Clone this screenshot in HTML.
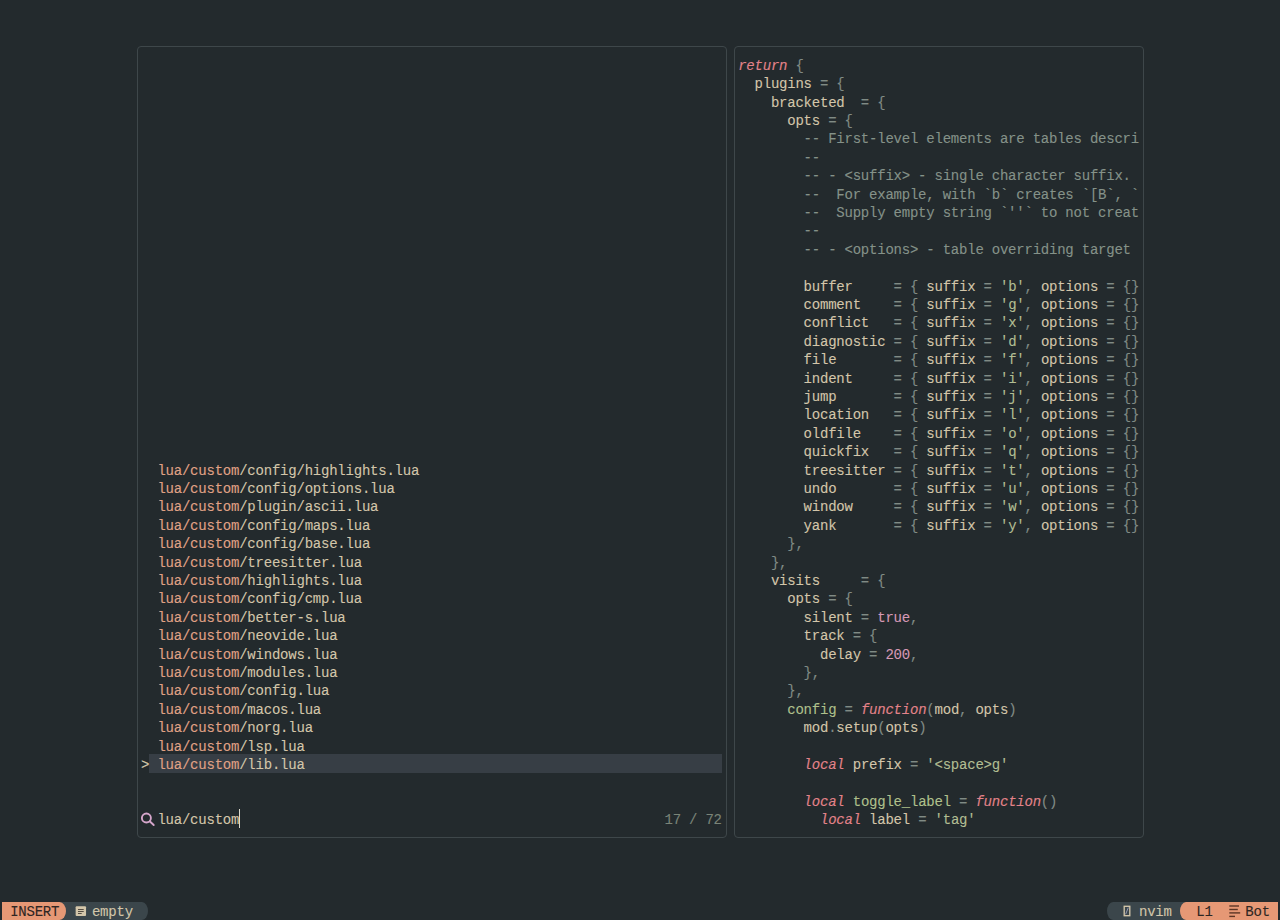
<!DOCTYPE html><html><head><meta charset="utf-8"><style>
html,body{margin:0;padding:0;width:1280px;height:920px;overflow:hidden;background:#232a2d;}
.t{position:absolute;white-space:pre;font-family:"Liberation Mono",monospace;font-size:14.0px;letter-spacing:-0.2214px;line-height:18.4px;height:18.4px;color:#d3c6aa;-webkit-text-stroke:0.1px currentColor;}
.m{color:#e0a286;}
.f{color:#d3c6aa;}
.p{color:#808b85;}
.c{color:#859289;}
.kw{color:#e3838a;font-style:italic;}
.s{color:#b2be93;}
.num{color:#d699b6;}
.fn{color:#afc08c;}
.ins{color:#2e2622;}
.cnt{color:#7a8478;}
.box{position:absolute;box-sizing:border-box;border:1px solid #3e474a;border-radius:4px;}
.r{position:absolute;}

</style></head><body>
<div class="box" style="left:137px;top:46px;width:590px;height:792px"></div>
<div class="box" style="left:734px;top:46px;width:410px;height:792px"></div>
<div class="r" style="left:149.00px;top:754.40px;width:573.00px;height:18.40px;background:#373e45;"></div>
<div class="r" style="left:239.00px;top:809.20px;width:1.30px;height:18.60px;background:#dcd9cc;"></div>
<svg class="r" style="left:141.02px;top:809.60px" width="16" height="19" viewBox="0 0 16 19"><circle cx="5.4" cy="8.0" r="4.5" fill="none" stroke="#d5a6cb" stroke-width="1.9"/><line x1="8.7" y1="11.3" x2="12.7" y2="15.0" stroke="#d5a6cb" stroke-width="1.9" stroke-linecap="round"/></svg>
<div class="r" style="left:51.04px;top:902.00px;width:96.78px;height:18.00px;background:#3b464b;border-radius:0 6px 6px 0 / 0 9px 9px 0"></div>
<div class="r" style="left:1.96px;top:901.60px;width:63.76px;height:18.40px;background:#e69875;border-radius:0 6.5px 6.5px 0 / 0 9px 9px 0"></div>
<svg class="r" style="left:75px;top:902px" width="12" height="19" viewBox="0 0 12 19"><rect x="0.65" y="4.3" width="10.4" height="9.8" rx="1" fill="#d3c6aa"/><rect x="3" y="7" width="5.7" height="1" fill="#554d43"/><rect x="3" y="9" width="5.7" height="1" fill="#554d43"/><rect x="3" y="11" width="3.7" height="1" fill="#554d43"/></svg>
<div class="r" style="left:1107.06px;top:902.00px;width:81.00px;height:18.00px;background:#3b464b;border-radius:6px 0 0 6px / 9px 0 0 9px"></div>
<div class="r" style="left:1180.48px;top:901.60px;width:97.52px;height:18.40px;background:#e69875;border-radius:6px 0 0 6px / 9px 0 0 9px"></div>
<svg class="r" style="left:1122px;top:902px" width="10" height="19" viewBox="0 0 10 19"><rect x="2.2" y="4.3" width="5.6" height="9.4" fill="none" stroke="#d3c6aa" stroke-width="1.35"/><line x1="3.6" y1="12.3" x2="6.3" y2="5.6" stroke="#a0a4c0" stroke-width="0.9"/></svg>
<svg class="r" style="left:1229px;top:902px" width="12" height="19" viewBox="0 0 12 19"><g fill="#5c3525"><rect x="0.3" y="3.3" width="9.7" height="1.4"/><rect x="0.3" y="6.8" width="8.5" height="1.4"/><rect x="0.3" y="10.2" width="10.9" height="1.4"/><rect x="0.3" y="13.7" width="5.7" height="1.4"/></g></svg>
<div class="t" style="left:157.38px;top:461.55px"><span class="m">lua/custom</span><span class="f">/config/highlights.lua</span></div>
<div class="t" style="left:157.38px;top:479.95px"><span class="m">lua/custom</span><span class="f">/config/options.lua</span></div>
<div class="t" style="left:157.38px;top:498.35px"><span class="m">lua/custom</span><span class="f">/plugin/ascii.lua</span></div>
<div class="t" style="left:157.38px;top:516.75px"><span class="m">lua/custom</span><span class="f">/config/maps.lua</span></div>
<div class="t" style="left:157.38px;top:535.15px"><span class="m">lua/custom</span><span class="f">/config/base.lua</span></div>
<div class="t" style="left:157.38px;top:553.55px"><span class="m">lua/custom</span><span class="f">/treesitter.lua</span></div>
<div class="t" style="left:157.38px;top:571.95px"><span class="m">lua/custom</span><span class="f">/highlights.lua</span></div>
<div class="t" style="left:157.38px;top:590.35px"><span class="m">lua/custom</span><span class="f">/config/cmp.lua</span></div>
<div class="t" style="left:157.38px;top:608.75px"><span class="m">lua/custom</span><span class="f">/better-s.lua</span></div>
<div class="t" style="left:157.38px;top:627.15px"><span class="m">lua/custom</span><span class="f">/neovide.lua</span></div>
<div class="t" style="left:157.38px;top:645.55px"><span class="m">lua/custom</span><span class="f">/windows.lua</span></div>
<div class="t" style="left:157.38px;top:663.95px"><span class="m">lua/custom</span><span class="f">/modules.lua</span></div>
<div class="t" style="left:157.38px;top:682.35px"><span class="m">lua/custom</span><span class="f">/config.lua</span></div>
<div class="t" style="left:157.38px;top:700.75px"><span class="m">lua/custom</span><span class="f">/macos.lua</span></div>
<div class="t" style="left:157.38px;top:719.15px"><span class="m">lua/custom</span><span class="f">/norg.lua</span></div>
<div class="t" style="left:157.38px;top:737.55px"><span class="m">lua/custom</span><span class="f">/lsp.lua</span></div>
<div class="t" style="left:157.38px;top:755.95px"><span class="m">lua/custom</span><span class="f">/lib.lua</span></div>
<div class="t" style="left:141.02px;top:755.95px"><span class="f">&gt;</span></div>
<div class="t" style="left:157.38px;top:811.15px"><span class="f">lua/custom</span></div>
<div class="t" style="left:664.54px;top:811.15px"><span class="cnt">17 / 72</span></div>
<div class="t" style="left:738.16px;top:56.75px"><span class="kw">return</span> <span class="p">{</span></div>
<div class="t" style="left:738.16px;top:75.15px"><span class="f">  plugins</span><span class="p"> = </span><span class="p">{</span></div>
<div class="t" style="left:738.16px;top:93.55px"><span class="f">    bracketed</span><span class="p">  = </span><span class="p">{</span></div>
<div class="t" style="left:738.16px;top:111.95px"><span class="f">      opts</span><span class="p"> = </span><span class="p">{</span></div>
<div class="t" style="left:738.16px;top:130.35px"><span class="c">        -- First-level elements are tables descri</span></div>
<div class="t" style="left:738.16px;top:148.75px"><span class="c">        --</span></div>
<div class="t" style="left:738.16px;top:167.15px"><span class="c">        -- - &lt;suffix&gt; - single character suffix.</span></div>
<div class="t" style="left:738.16px;top:185.55px"><span class="c">        --  For example, with `b` creates `[B`, `</span></div>
<div class="t" style="left:738.16px;top:203.95px"><span class="c">        --  Supply empty string `''` to not creat</span></div>
<div class="t" style="left:738.16px;top:222.35px"><span class="c">        --</span></div>
<div class="t" style="left:738.16px;top:240.75px"><span class="c">        -- - &lt;options&gt; - table overriding target</span></div>
<div class="t" style="left:738.16px;top:277.55px"><span class="f">        buffer     </span><span class="p">= </span><span class="p">{ </span><span class="f">suffix</span><span class="p"> = </span><span class="s">'b'</span><span class="p">, </span><span class="f">options</span><span class="p"> = </span><span class="p">{}</span></div>
<div class="t" style="left:738.16px;top:295.95px"><span class="f">        comment    </span><span class="p">= </span><span class="p">{ </span><span class="f">suffix</span><span class="p"> = </span><span class="s">'g'</span><span class="p">, </span><span class="f">options</span><span class="p"> = </span><span class="p">{}</span></div>
<div class="t" style="left:738.16px;top:314.35px"><span class="f">        conflict   </span><span class="p">= </span><span class="p">{ </span><span class="f">suffix</span><span class="p"> = </span><span class="s">'x'</span><span class="p">, </span><span class="f">options</span><span class="p"> = </span><span class="p">{}</span></div>
<div class="t" style="left:738.16px;top:332.75px"><span class="f">        diagnostic </span><span class="p">= </span><span class="p">{ </span><span class="f">suffix</span><span class="p"> = </span><span class="s">'d'</span><span class="p">, </span><span class="f">options</span><span class="p"> = </span><span class="p">{}</span></div>
<div class="t" style="left:738.16px;top:351.15px"><span class="f">        file       </span><span class="p">= </span><span class="p">{ </span><span class="f">suffix</span><span class="p"> = </span><span class="s">'f'</span><span class="p">, </span><span class="f">options</span><span class="p"> = </span><span class="p">{}</span></div>
<div class="t" style="left:738.16px;top:369.55px"><span class="f">        indent     </span><span class="p">= </span><span class="p">{ </span><span class="f">suffix</span><span class="p"> = </span><span class="s">'i'</span><span class="p">, </span><span class="f">options</span><span class="p"> = </span><span class="p">{}</span></div>
<div class="t" style="left:738.16px;top:387.95px"><span class="f">        jump       </span><span class="p">= </span><span class="p">{ </span><span class="f">suffix</span><span class="p"> = </span><span class="s">'j'</span><span class="p">, </span><span class="f">options</span><span class="p"> = </span><span class="p">{}</span></div>
<div class="t" style="left:738.16px;top:406.35px"><span class="f">        location   </span><span class="p">= </span><span class="p">{ </span><span class="f">suffix</span><span class="p"> = </span><span class="s">'l'</span><span class="p">, </span><span class="f">options</span><span class="p"> = </span><span class="p">{}</span></div>
<div class="t" style="left:738.16px;top:424.75px"><span class="f">        oldfile    </span><span class="p">= </span><span class="p">{ </span><span class="f">suffix</span><span class="p"> = </span><span class="s">'o'</span><span class="p">, </span><span class="f">options</span><span class="p"> = </span><span class="p">{}</span></div>
<div class="t" style="left:738.16px;top:443.15px"><span class="f">        quickfix   </span><span class="p">= </span><span class="p">{ </span><span class="f">suffix</span><span class="p"> = </span><span class="s">'q'</span><span class="p">, </span><span class="f">options</span><span class="p"> = </span><span class="p">{}</span></div>
<div class="t" style="left:738.16px;top:461.55px"><span class="f">        treesitter </span><span class="p">= </span><span class="p">{ </span><span class="f">suffix</span><span class="p"> = </span><span class="s">'t'</span><span class="p">, </span><span class="f">options</span><span class="p"> = </span><span class="p">{}</span></div>
<div class="t" style="left:738.16px;top:479.95px"><span class="f">        undo       </span><span class="p">= </span><span class="p">{ </span><span class="f">suffix</span><span class="p"> = </span><span class="s">'u'</span><span class="p">, </span><span class="f">options</span><span class="p"> = </span><span class="p">{}</span></div>
<div class="t" style="left:738.16px;top:498.35px"><span class="f">        window     </span><span class="p">= </span><span class="p">{ </span><span class="f">suffix</span><span class="p"> = </span><span class="s">'w'</span><span class="p">, </span><span class="f">options</span><span class="p"> = </span><span class="p">{}</span></div>
<div class="t" style="left:738.16px;top:516.75px"><span class="f">        yank       </span><span class="p">= </span><span class="p">{ </span><span class="f">suffix</span><span class="p"> = </span><span class="s">'y'</span><span class="p">, </span><span class="f">options</span><span class="p"> = </span><span class="p">{}</span></div>
<div class="t" style="left:738.16px;top:535.15px"><span class="p">      },</span></div>
<div class="t" style="left:738.16px;top:553.55px"><span class="p">    },</span></div>
<div class="t" style="left:738.16px;top:571.95px"><span class="f">    visits</span><span class="p">     = </span><span class="p">{</span></div>
<div class="t" style="left:738.16px;top:590.35px"><span class="f">      opts</span><span class="p"> = </span><span class="p">{</span></div>
<div class="t" style="left:738.16px;top:608.75px"><span class="f">        silent</span><span class="p"> = </span><span class="num">true</span><span class="p">,</span></div>
<div class="t" style="left:738.16px;top:627.15px"><span class="f">        track</span><span class="p"> = </span><span class="p">{</span></div>
<div class="t" style="left:738.16px;top:645.55px"><span class="f">          delay</span><span class="p"> = </span><span class="num">200</span><span class="p">,</span></div>
<div class="t" style="left:738.16px;top:663.95px"><span class="p">        },</span></div>
<div class="t" style="left:738.16px;top:682.35px"><span class="p">      },</span></div>
<div class="t" style="left:738.16px;top:700.75px"><span class="fn">      config</span><span class="p"> = </span><span class="kw">function</span><span class="p">(</span><span class="f">mod</span><span class="p">, </span><span class="f">opts</span><span class="p">)</span></div>
<div class="t" style="left:738.16px;top:719.15px"><span class="f">        mod</span><span class="p">.</span><span class="f">setup</span><span class="p">(</span><span class="f">opts</span><span class="p">)</span></div>
<div class="t" style="left:738.16px;top:755.95px"><span class="f">        </span><span class="kw">local</span><span class="f"> prefix</span><span class="p"> = </span><span class="s">'&lt;space&gt;g'</span></div>
<div class="t" style="left:738.16px;top:792.75px"><span class="f">        </span><span class="kw">local</span><span class="fn"> toggle_label</span><span class="p"> = </span><span class="kw">function</span><span class="p">()</span></div>
<div class="t" style="left:738.16px;top:811.15px"><span class="f">          </span><span class="kw">local</span><span class="f"> label</span><span class="p"> = </span><span class="s">'tag'</span></div>
<div class="t" style="left:10.14px;top:903.15px"><span class="ins">INSERT</span></div>
<div class="t" style="left:91.94px;top:903.15px"><span class="f">empty</span></div>
<div class="t" style="left:1138.98px;top:903.15px"><span class="f">nvim</span></div>
<div class="t" style="left:1196.24px;top:903.15px"><span class="ins">L1</span></div>
<div class="t" style="left:1245.32px;top:903.15px"><span class="ins">Bot</span></div>
</body></html>
